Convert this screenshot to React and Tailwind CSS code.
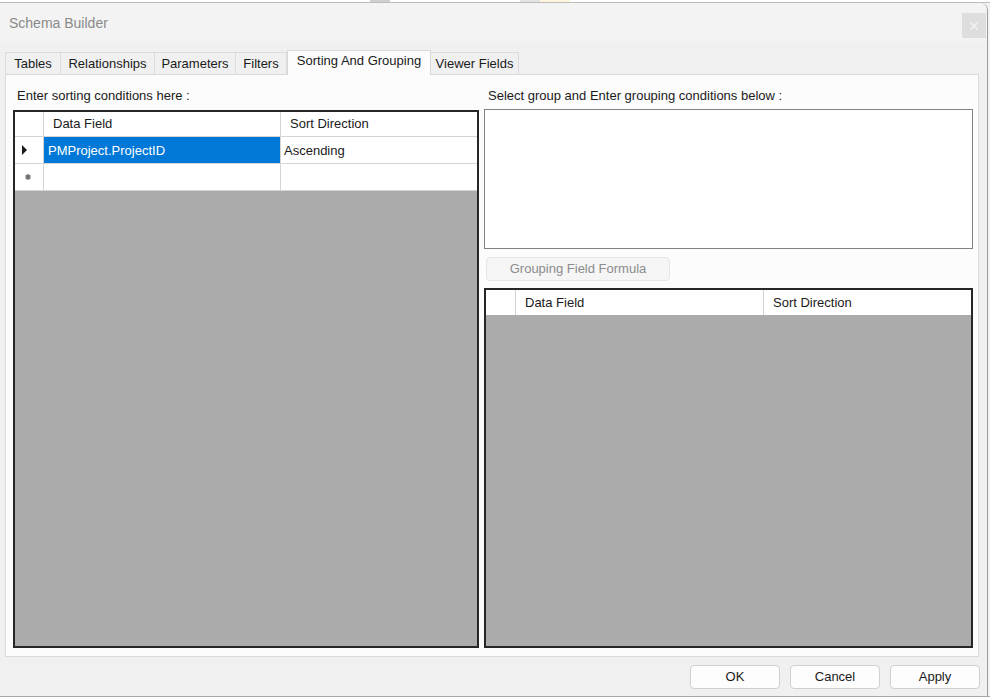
import React from "react";

const font = { fontFamily: '"Liberation Sans", Arial, sans-serif' };

function Tab({ label, w, selected }) {
  if (selected) {
    return (
      <div
        className={`relative z-10 -mb-px h-[25px] flex items-start justify-center pt-[2px] bg-[#fcfcfc] border border-b-0 border-[#d9d9d9] text-[13px] text-[#1a1a1a] leading-[16px]`}
        style={{ width: w }}
      >
        {label}
      </div>
    );
  }
  return (
    <div
      className="h-[22px] flex items-center justify-center bg-[#f0f0f0] border border-b-0 border-l-0 first:border-l border-[#dcdcdc] text-[13px] text-[#1a1a1a] leading-[16px]"
      style={{ width: w }}
    >
      {label}
    </div>
  );
}

function Triangle() {
  return (
    <svg width="6" height="10" viewBox="0 0 6 10" className="ml-[7px]">
      <path d="M0 0 L5 5 L0 10 Z" fill="#1a1a1a" />
    </svg>
  );
}

function Star() {
  return (
    <svg width="6" height="6" viewBox="0 0 6 6" className="ml-[10px]">
      <path d="M3 0 L3 6 M0 3 L6 3 M0.8 0.8 L5.2 5.2 M5.2 0.8 L0.8 5.2" stroke="#6a6a6a" strokeWidth="1.2" />
    </svg>
  );
}

export default function App() {
  return (
    <div className="w-[990px] h-[697px] overflow-hidden bg-[#f4f4f4] flex flex-col text-[#1a1a1a]" style={font}>
      {/* background app strip */}
      <div className="h-[3px] flex bg-white border-b border-[#bdbdbd]">
        <div className="w-[370px]" />
        <div className="w-[20px] bg-[#cfcfcf]" />
        <div className="w-[130px]" />
        <div className="w-[20px] bg-[#e3e3e3]" />
        <div className="w-[30px] bg-[#fff5dc]" />
      </div>

      <div className="flex">
        {/* dialog */}
        <div className="w-[988px] h-[693px] bg-[#f0f0f0] border-r border-[#9c9c9c] rounded-tr-[7px] flex flex-col">
          {/* title bar */}
          <div className="h-[38px] flex items-start justify-between bg-[#f3f3f3] pl-[9px] pr-[1px] rounded-tr-[7px]">
            <span className="pt-[11px] text-[14px] leading-[18px] text-[#8a8a8a]">Schema Builder</span>
            <div className="mt-[10px] w-[24px] h-[25px] bg-[#dedede] flex items-center justify-center">
              <svg width="8" height="8" viewBox="0 0 8 8">
                <path d="M0.5 0.5 L7.5 7.5 M7.5 0.5 L0.5 7.5" stroke="#f4f4f4" strokeWidth="1.2" />
              </svg>
            </div>
          </div>

          {/* tabs */}
          <div className="h-[33px] pt-[9px] pl-[5px] flex items-end">
            <Tab label="Tables" w={56} />
            <Tab label="Relationships" w={94} />
            <Tab label="Parameters" w={81} />
            <Tab label="Filters" w={51} />
            <Tab label="Sorting And Grouping" w={144} selected />
            <Tab label="Viewer Fields" w={88} />
          </div>

          {/* tab page */}
          <div className="ml-[5px] w-[974px] h-[583px] bg-[#fcfcfc] border border-[#dadada] flex gap-[5px] pl-[7px] pr-[5px] pt-[13px] pb-[8px]">
            {/* left column */}
            <div className="w-[466px] flex flex-col">
              <div className="pl-[4px] text-[13px] leading-[16px]">Enter sorting conditions here :</div>
              <div className="mt-[6px] flex-1 border-2 border-[#262626] bg-[#ababab] flex flex-col">
                <div className="flex h-[25px] bg-white border-b border-[#d4d4d4] text-[13px]">
                  <div className="w-[29px] border-r border-[#d4d4d4]" />
                  <div className="w-[237px] border-r border-[#d4d4d4] pl-[9px] flex items-center">Data Field</div>
                  <div className="flex-1 pl-[9px] flex items-center">Sort Direction</div>
                </div>
                <div className="flex h-[27px] bg-white border-b border-[#d4d4d4] text-[13px]">
                  <div className="w-[29px] border-r border-[#d4d4d4] flex items-center">
                    <Triangle />
                  </div>
                  <div className="w-[237px] border-r border-[#d4d4d4] pl-[4px] pt-[1px] flex items-center bg-[#0078d7] text-white">
                    PMProject.ProjectID
                  </div>
                  <div className="flex-1 pl-[3px] pt-[1px] flex items-center">Ascending</div>
                </div>
                <div className="flex h-[27px] bg-white border-b border-[#d4d4d4] text-[13px]">
                  <div className="w-[29px] border-r border-[#d4d4d4] flex items-center">
                    <Star />
                  </div>
                  <div className="w-[237px] border-r border-[#d4d4d4]" />
                  <div className="flex-1" />
                </div>
              </div>
            </div>

            {/* right column */}
            <div className="w-[489px] flex flex-col">
              <div className="pl-[4px] text-[13px] leading-[16px]">Select group and Enter grouping conditions below :</div>
              <div className="mt-[5px] h-[140px] bg-white border border-[#828282]" />
              <div className="mt-[8px] ml-[2px] w-[184px] h-[24px] rounded-[4px] border border-[#e6e6e6] bg-[#f5f5f5] flex items-center justify-center text-[13px] text-[#8c8c8c]">
                Grouping Field Formula
              </div>
              <div className="mt-[7px] flex-1 border-2 border-[#262626] bg-[#ababab] flex flex-col">
                <div className="flex h-[25px] bg-white text-[13px]">
                  <div className="w-[30px] border-r border-[#d4d4d4]" />
                  <div className="w-[248px] border-r border-[#d4d4d4] pl-[9px] flex items-center">Data Field</div>
                  <div className="flex-1 pl-[9px] flex items-center">Sort Direction</div>
                </div>
              </div>
            </div>
          </div>

          {/* buttons */}
          <div className="flex-1 flex justify-end items-start gap-[10px] pt-[8px] pr-[7px]">
            {["OK", "Cancel", "Apply"].map((b) => (
              <div
                key={b}
                className="w-[90px] h-[24px] rounded-[4px] border border-[#d0d0d0] bg-[#fdfdfd] flex items-center justify-center text-[13px]"
              >
                {b}
              </div>
            ))}
          </div>
        </div>
        <div className="flex-1 bg-[#f4f4f4]" />
      </div>
      <div className="flex-1 bg-[#a8a8a8]" />
    </div>
  );
}
